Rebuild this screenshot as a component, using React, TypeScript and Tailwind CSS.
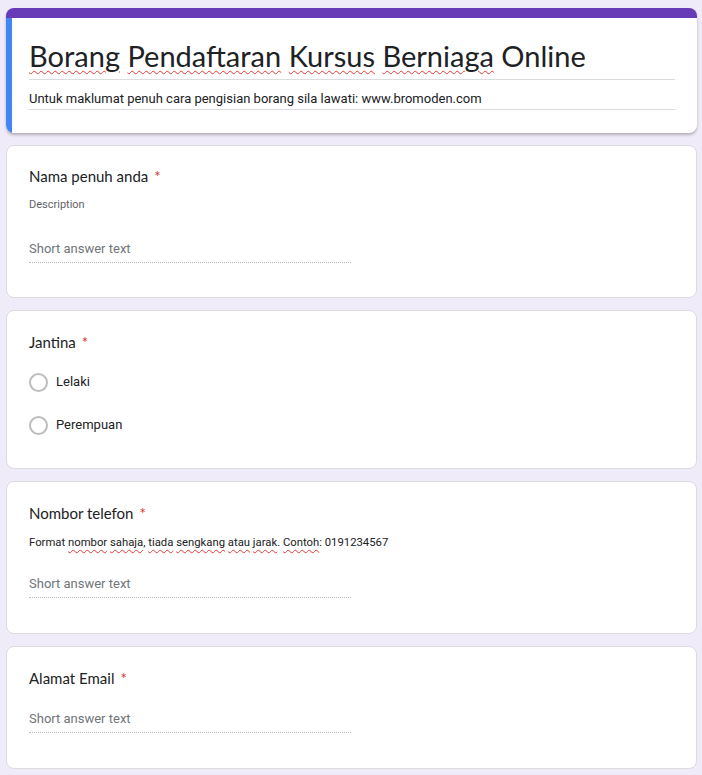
const sans = "font-['Lato','Roboto',sans-serif]";
const body = "font-['Roboto','Noto_Sans',sans-serif]";

function Req() {
  return <span className="ml-[6px] text-[#d93025]">*</span>;
}

function Spell({ children }: { children: React.ReactNode }) {
  return (
    <span className="underline decoration-wavy decoration-[#e53935] decoration-1 underline-offset-[3px]">
      {children}
    </span>
  );
}

function ShortAnswer({ className = "" }: { className?: string }) {
  return (
    <div className={`w-[322px] border-b border-dotted border-[#bdbdbd] pb-[3px] ${className}`}>
      <div className={`${body} text-[13px] leading-5 text-[#70757a]`}>Short answer text</div>
    </div>
  );
}

function Card({ children, className = "" }: { children: React.ReactNode; className?: string }) {
  return (
    <div className={`rounded-lg border border-[#dadce0] bg-white px-[22px] ${className}`}>
      {children}
    </div>
  );
}

function QTitle({ children }: { children: React.ReactNode }) {
  return (
    <div className={`${sans} text-[15px] leading-6 text-[#202124]`}>
      {children}
      <Req />
    </div>
  );
}

function Radio({ label }: { label: string }) {
  return (
    <div className="flex h-6 items-center">
      <span className="h-[19px] w-[19px] rounded-full border-2 border-[#bdbdbd]" />
      <span className={`${body} ml-[8px] text-[13px] text-[#202124]`}>{label}</span>
    </div>
  );
}

export default function App() {
  return (
    <div className="min-h-screen bg-[#f0ebf8] pl-[6px] pr-[5px] pt-2">
      <div className="flex flex-col gap-3">
        <div className="overflow-hidden rounded-lg border-t-[10px] border-[#673ab7] bg-white shadow-[0_2px_3px_rgba(0,0,0,0.25)]">
          <div className="border-l-[6px] border-[#4285f4] pb-[23px] pl-[17px] pr-[22px] pt-[18px]">
            <div className={`${sans} border-b border-[#dadce0] pb-[3px] text-[29px] leading-10 text-[#202124]`}>
              <Spell>Borang</Spell> <Spell>Pendaftaran</Spell> <Spell>Kursus</Spell> <Spell>Berniaga</Spell> Online
            </div>
            <div className={`${body} mt-[9px] border-b border-[#dadce0] text-[13px] leading-5 text-[#202124]`}>
              Untuk maklumat penuh cara pengisian borang sila lawati: www.bromoden.com
            </div>
          </div>
        </div>

        <Card className="pb-[34px] pt-[18px]">
          <QTitle>Nama penuh anda</QTitle>
          <div className={`${body} mt-[9px] text-[11px] leading-4 text-[#5f6368]`}>Description</div>
          <ShortAnswer className="mt-[26px]" />
        </Card>

        <Card className="pb-[31px] pt-[19px]">
          <QTitle>Jantina</QTitle>
          <div className="mt-4 flex flex-col gap-[19px]">
            <Radio label="Lelaki" />
            <Radio label="Perempuan" />
          </div>
        </Card>

        <Card className="pb-[35px] pt-[19px]">
          <QTitle>Nombor telefon</QTitle>
          <div className={`${body} mt-[10px] text-[11.3px] leading-4 text-[#202124]`}>
            Format <Spell>nombor</Spell> <Spell>sahaja</Spell>, <Spell>tiada</Spell> <Spell>sengkang</Spell>{" "}
            <Spell>atau</Spell> <Spell>jarak</Spell>. <Spell>Contoh</Spell>: 0191234567
          </div>
          <ShortAnswer className="mt-[23px]" />
        </Card>

        <Card className="pb-[35px] pt-[19px]">
          <QTitle>Alamat Email</QTitle>
          <ShortAnswer className="mt-[19px]" />
        </Card>
      </div>
    </div>
  );
}
